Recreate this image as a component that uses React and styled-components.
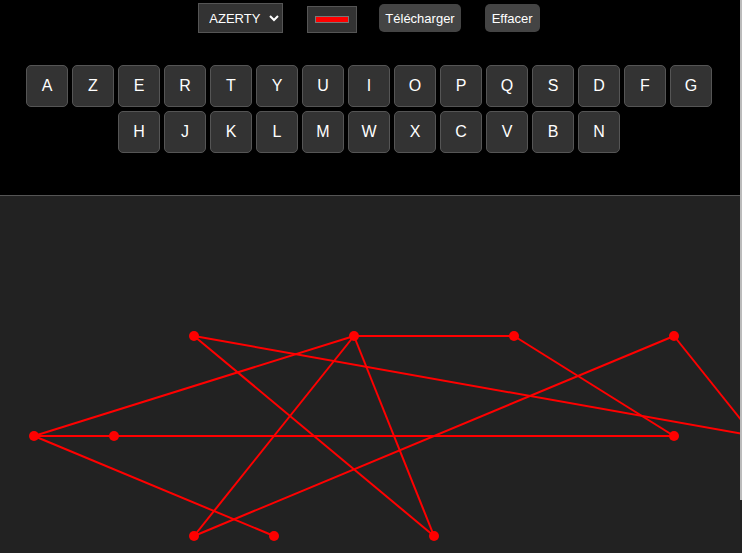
import React, { useState } from 'react';
import { styled, createGlobalStyle } from 'styled-components';

const Global = createGlobalStyle`
  html, body {
    margin: 0;
    background: #000;
    color: #fff;
    font-family: "Liberation Sans", Arial, sans-serif;
  }
`;

const Top = styled.div`
  padding-right: 4px;
  height: 195px;
  box-sizing: border-box;
`;

const Toolbar = styled.div`
  display: flex;
  justify-content: center;
  align-items: flex-start;
  gap: 24px;
  padding-top: 3px;
`;

const Select = styled.select`
  width: 85px;
  height: 30px;
  background: #333;
  color: #fff;
  border: 1px solid #555;
  font-family: "Liberation Sans", Arial, sans-serif;
  font-size: 13px;
  padding: 0 4px 0 6px;
`;

const Color = styled.input`
  width: 50px;
  height: 27px;
  margin: 3px -2px 0 0;
  background: #333;
  border: 1px solid #555;
  padding: 0;
  box-sizing: border-box;
  &::-webkit-color-swatch-wrapper {
    padding: 9px 7px;
  }
  &::-webkit-color-swatch {
    border: 1px solid #777;
  }
`;

const Button = styled.button`
  margin-top: 1px;
  height: 28px;
  padding: 0 ${(p) => (p.$pad ? p.$pad : 6)}px;
  background: #444;
  color: #fff;
  border: none;
  border-radius: 5px;
  font-family: "Liberation Sans", Arial, sans-serif;
  font-size: 13px;
`;

const Keyboard = styled.div`
  margin-top: 32px;
  display: flex;
  flex-direction: column;
  align-items: center;
  gap: 4px;
`;

const Row = styled.div`
  display: flex;
  gap: 4px;
`;

const Key = styled.button`
  width: 42px;
  height: 42px;
  padding: 0;
  background: #333;
  color: #fff;
  border: 1px solid #555;
  border-radius: 5px;
  font-family: "Liberation Sans", Arial, sans-serif;
  font-size: 16px;
`;

const Board = styled.div`
  border-top: 1px solid #555;
  background: #222;
  height: 405px;
`;

const Drawing = styled.svg`
  display: block;
`;

const Thumb = styled.div`
  position: fixed;
  top: 0;
  right: 0;
  width: 2px;
  height: 500px;
  background: #bbb;
`;

const rows = ['AZERTYUIOPQSDFG', 'HJKLMWXCVBN'];

const points = [
  [194, 140], [354, 140], [514, 140], [674, 140],
  [34, 240], [114, 240], [674, 240], [754, 240],
  [194, 340], [274, 340], [434, 340],
];

const segments = [
  [194, 140, 754, 240],
  [194, 140, 434, 340],
  [354, 140, 514, 140],
  [354, 140, 34, 240],
  [354, 140, 194, 340],
  [354, 140, 434, 340],
  [514, 140, 674, 240],
  [674, 140, 194, 340],
  [674, 140, 754, 240],
  [34, 240, 674, 240],
  [34, 240, 274, 340],
];

const App = () => {
  const [layout, setLayout] = useState('azerty');
  return (
    <>
      <Global />
      <Top>
        <Toolbar>
          <Select value={layout} onChange={(e) => setLayout(e.target.value)}>
            <option value="azerty">AZERTY</option>
            <option value="qwerty">QWERTY</option>
          </Select>
          <Color type="color" defaultValue="#ff0000" />
          <Button>Télécharger</Button>
          <Button $pad={7}>Effacer</Button>
        </Toolbar>
        <Keyboard>
          {rows.map((r) => (
            <Row key={r}>
              {r.split('').map((c) => (
                <Key key={c}>{c}</Key>
              ))}
            </Row>
          ))}
        </Keyboard>
      </Top>
      <Board>
        <Drawing width="100%" height="400">
          {segments.map(([x1, y1, x2, y2], i) => (
            <line key={i} x1={x1} y1={y1} x2={x2} y2={y2} stroke="#f00" strokeWidth="2" />
          ))}
          {points.map(([x, y], i) => (
            <circle key={i} cx={x} cy={y} r="5" fill="#f00" />
          ))}
        </Drawing>
      </Board>
      <Thumb />
    </>
  );
};

export default App;
